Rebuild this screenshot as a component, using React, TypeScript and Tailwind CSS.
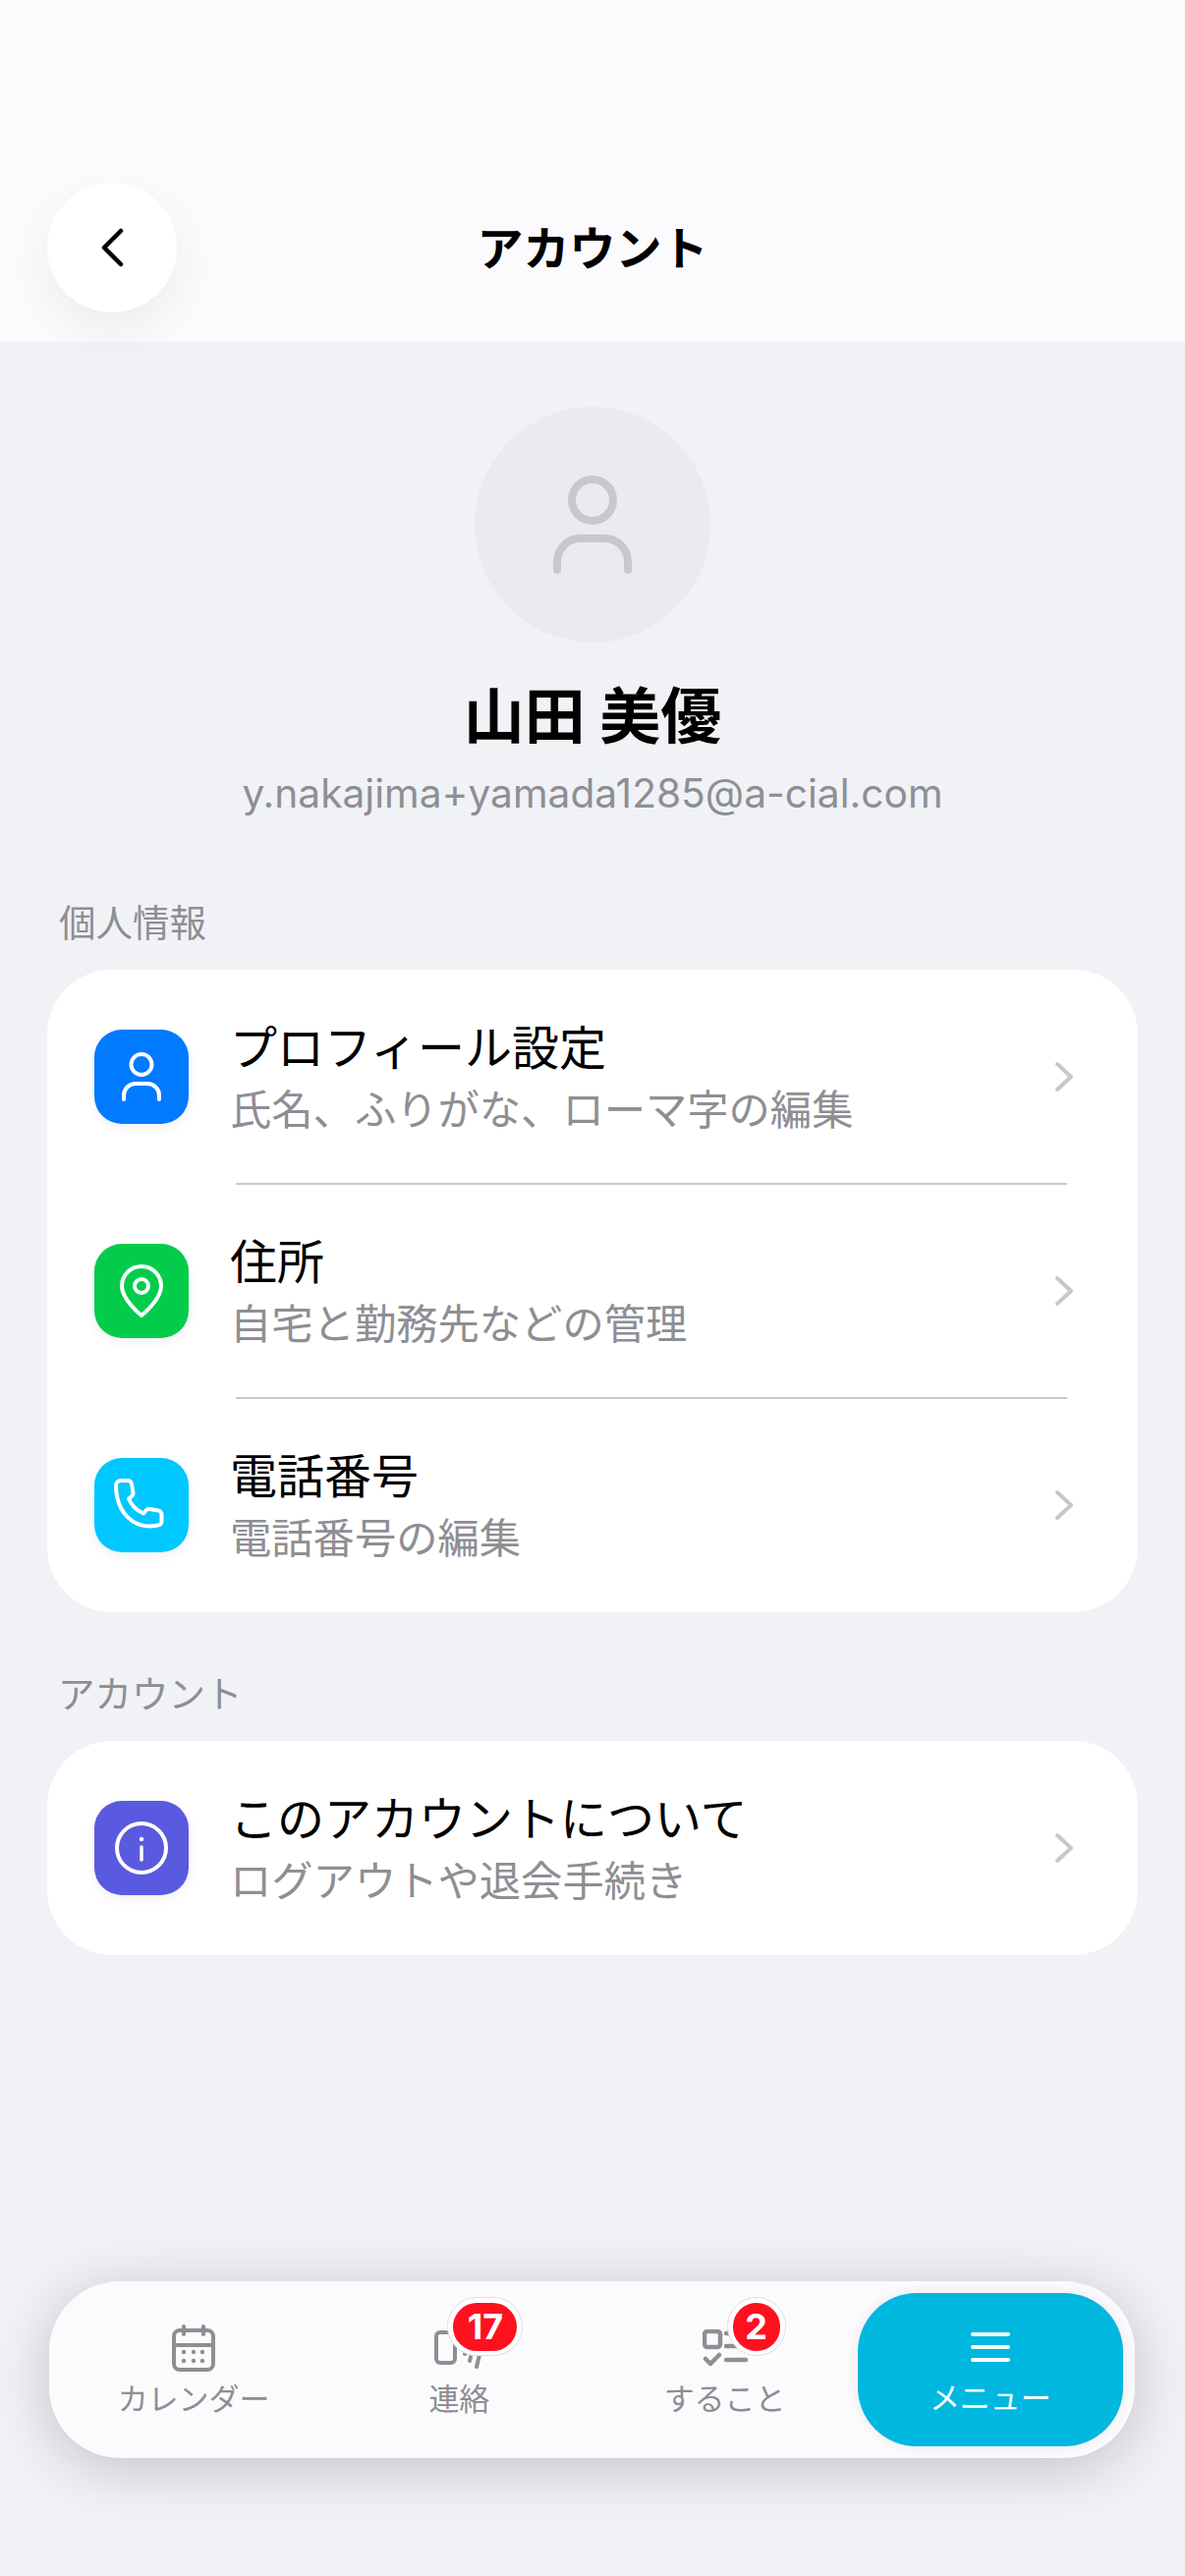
const fontStack = "font-['Inter','Noto_Sans_CJK_JP',sans-serif]";

function PersonIcon() {
  return (
    <svg viewBox="0 0 96 96" className="w-24 h-24" fill="none" stroke="white" strokeWidth="4" strokeLinecap="round">
      <circle cx="48" cy="35.5" r="10.5" />
      <path d="M30 71v-4a12 12 0 0 1 12-12h12a12 12 0 0 1 12 12v4" />
    </svg>
  );
}

function PinIcon() {
  return (
    <svg viewBox="0 0 96 96" className="w-24 h-24" fill="none" stroke="white" strokeWidth="4" strokeLinejoin="round">
      <path d="M48 73C48 73 28 57 28 43a20 20 0 0 1 40 0C68 57 48 73 48 73Z" />
      <circle cx="48" cy="43" r="7" />
    </svg>
  );
}

function PhoneIcon() {
  return (
    <svg viewBox="0 0 96 96" className="w-24 h-24" fill="none" stroke="white" strokeWidth="4" strokeLinejoin="round">
      <path d="M27 23h7a4 4 0 0 1 4 3.5l1.5 9a4 4 0 0 1-1.500 3.500l-3 2.500c3 7 8 12 15 15l2.500-3a4 4 0 0 1 3.500-1.500l9 1.500a4 4 0 0 1 3.500 4v7a4 4 0 0 1-4 4C40 74 22 55 22 28a5 5 0 0 1 5-5Z" />
    </svg>
  );
}

function InfoIcon() {
  return (
    <svg viewBox="0 0 96 96" className="w-24 h-24" fill="none" stroke="white" strokeWidth="4">
      <circle cx="48" cy="48" r="25" />
      <path d="M48 47v13" strokeWidth="3.500" strokeLinecap="round" />
      <circle cx="48" cy="39" r="2.200" fill="white" stroke="none" />
    </svg>
  );
}

function Chevron() {
  return (
    <svg viewBox="0 0 20 32" className="w-5 h-8 shrink-0" fill="none" stroke="#c7c7cc" strokeWidth="4" strokeLinecap="round" strokeLinejoin="round">
      <path d="M3 3l14 13L3 29" />
    </svg>
  );
}

function Row({ color, icon, title, sub, divider }: { color: string; icon: React.ReactNode; title: string; sub: string; divider?: boolean }) {
  return (
    <div className="relative h-[218px] flex items-center pl-12 pr-[65px]">
      <div className={`w-24 h-24 rounded-[28px] shrink-0 shadow-[0_4px_12px_rgba(0,0,0,0.06)] ${color}`}>{icon}</div>
      <div className="flex-1 ml-[42px] pt-[8px]">
        <p className="text-[48px] leading-[60px] text-black">{title}</p>
        <p className="text-[42.300px] leading-[66px] text-[#8e8e93]">{sub}</p>
      </div>
      <Chevron />
      {divider && <div className="absolute left-[192px] right-[72px] -bottom-px h-[2px] bg-[#c8c8ce]" />}
    </div>
  );
}

function Badge({ text, className, inner }: { text: string; className: string; inner: string }) {
  return (
    <span className={`absolute h-[60px] px-[5px] flex items-center justify-center rounded-full bg-white border border-[#dedee2] ${className}`}>
      <span className={`h-[49px] flex items-center justify-center rounded-full bg-[#ff101f] text-white text-[36px] leading-none font-bold ${inner}`}>
        {text}
      </span>
    </span>
  );
}

function Tab({ icon, label, badge }: { icon: React.ReactNode; label: string; badge?: React.ReactNode }) {
  return (
    <div className="flex flex-col items-center pt-[30px]">
      <div className="relative h-[52px] flex items-center justify-center">
        {icon}
        {badge}
      </div>
      <span className="mt-[6px] text-[31px] leading-[40px] text-[#8e8e93]">{label}</span>
    </div>
  );
}

export default function App() {
  return (
    <div className={`relative w-[1206px] h-[2622px] bg-[#f1f2f6] overflow-hidden ${fontStack}`}>
      {/* Header */}
      <header className="relative h-[348px] bg-[#fbfbfd] flex items-end justify-center pb-[69px]">
        <h1 className="text-[47px] leading-[52px] font-bold text-black">アカウント</h1>
        <button className="absolute left-12 top-[186px] w-[132px] h-[132px] rounded-full bg-white shadow-[0_20px_50px_rgba(0,0,0,0.06)] flex items-center justify-center">
          <svg viewBox="0 0 28 40" className="w-7 h-10" fill="none" stroke="black" strokeWidth="4.500" strokeLinecap="round" strokeLinejoin="round">
            <path d="M23 3L6 20l17 17" />
          </svg>
        </button>
      </header>

      {/* Profile */}
      <section className="flex flex-col items-center pt-[66px]">
        <div className="w-[240px] h-[240px] rounded-full bg-[#e9ebee] flex items-center justify-center">
          <svg viewBox="0 0 80 100" className="w-20 h-[100px]" fill="none" stroke="#c7c7cc" strokeWidth="8" strokeLinecap="round">
            <circle cx="40" cy="25" r="21" />
            <path d="M4 96v-8a24 24 0 0 1 24-24h24a24 24 0 0 1 24 24v8" />
          </svg>
        </div>
        <h2 className="mt-[40px] text-[62px] leading-[72px] font-bold text-black">山田 美優</h2>
        <p className="mt-[18px] text-[40.700px] leading-[48px] text-[#8e8e93]">y.nakajima+yamada1285@a-cial.com</p>
      </section>

      {/* Personal info */}
      <section className="px-12 mt-[85px]">
        <p className="pl-3 text-[37.500px] leading-[46px] text-[#8e8e93]">個人情報</p>
        <div className="mt-[24px] bg-white rounded-[66px]">
          <Row color="bg-[#007aff]" icon={<PersonIcon />} title="プロフィール設定" sub="氏名、ふりがな、ローマ字の編集" divider />
          <Row color="bg-[#04cc4b]" icon={<PinIcon />} title="住所" sub="自宅と勤務先などの管理" divider />
          <Row color="bg-[#00c7ff]" icon={<PhoneIcon />} title="電話番号" sub="電話番号の編集" />
        </div>
      </section>

      {/* Account */}
      <section className="px-12 mt-[61px]">
        <p className="pl-[11px] text-[37.500px] leading-[46px] text-[#8e8e93]">アカウント</p>
        <div className="mt-[24px] bg-white rounded-[66px]">
          <Row color="bg-[#5a5ae0]" icon={<InfoIcon />} title="このアカウントについて" sub="ログアウトや退会手続き" />
        </div>
      </section>

      {/* Tab bar */}
      <nav className="absolute left-[50px] top-[2322px] w-[1105px] h-[180px] p-3 grid grid-cols-4 rounded-[72px] bg-[#fbfbfd] shadow-[0_10px_60px_rgba(0,0,0,0.2)]">
        <Tab
          label="カレンダー"
          icon={
            <svg viewBox="0 0 44 48" className="w-11 h-12" fill="none" stroke="#8e8e93" strokeWidth="4" strokeLinecap="round">
              <rect x="2" y="6" width="40" height="40" rx="6" />
              <path d="M2 21h40M12 2v8M32 2v8" />
              <g fill="#8e8e93" stroke="none">
                <circle cx="12" cy="28" r="2.200" />
                <circle cx="22" cy="28" r="2.200" />
                <circle cx="31" cy="28" r="2.200" />
                <circle cx="12" cy="37" r="2.200" />
                <circle cx="22" cy="37" r="2.200" />
                <circle cx="31" cy="37" r="2.200" />
              </g>
            </svg>
          }
        />
        <Tab
          label="連絡"
          icon={
            <svg viewBox="0 0 52 40" className="w-[52px] h-10 translate-y-[2px] translate-x-[1px]" fill="none" stroke="#8e8e93" strokeWidth="4" strokeLinecap="round">
              <rect x="2" y="2" width="19" height="31" rx="4" />
              <path d="M31 24h.5M37 27l-1 4M46 25l-3 12" />
            </svg>
          }
          badge={<Badge text="17" inner="w-[65px]" className="left-[14px] -top-[26px]" />}
        />
        <Tab
          label="すること"
          icon={
            <svg viewBox="0 0 46 38" className="w-[46px] h-[38px]" fill="none" stroke="#8e8e93" strokeWidth="4.500" strokeLinecap="round" strokeLinejoin="round">
              <rect x="2" y="2" width="16" height="16" rx="3" />
              <path d="M24 4h20M24 17h20M24 31h20M3 30l5 5 9-9" />
            </svg>
          }
          badge={<Badge text="2" inner="w-[48px]" className="left-[25px] -top-[26px]" />}
        />
        <div className="rounded-[60px] bg-[#00b7df] flex flex-col items-center pt-[39px] shadow-[0_0_14px_rgba(0,0,0,0.08)]">
          <svg viewBox="0 0 40 32" className="w-10 h-8" fill="none" stroke="white" strokeWidth="4" strokeLinecap="round">
            <path d="M2 3h36M2 16h36M2 29h36" />
          </svg>
          <span className="mt-[16px] text-[31px] leading-[40px] text-white">メニュー</span>
        </div>
      </nav>
    </div>
  );
}
